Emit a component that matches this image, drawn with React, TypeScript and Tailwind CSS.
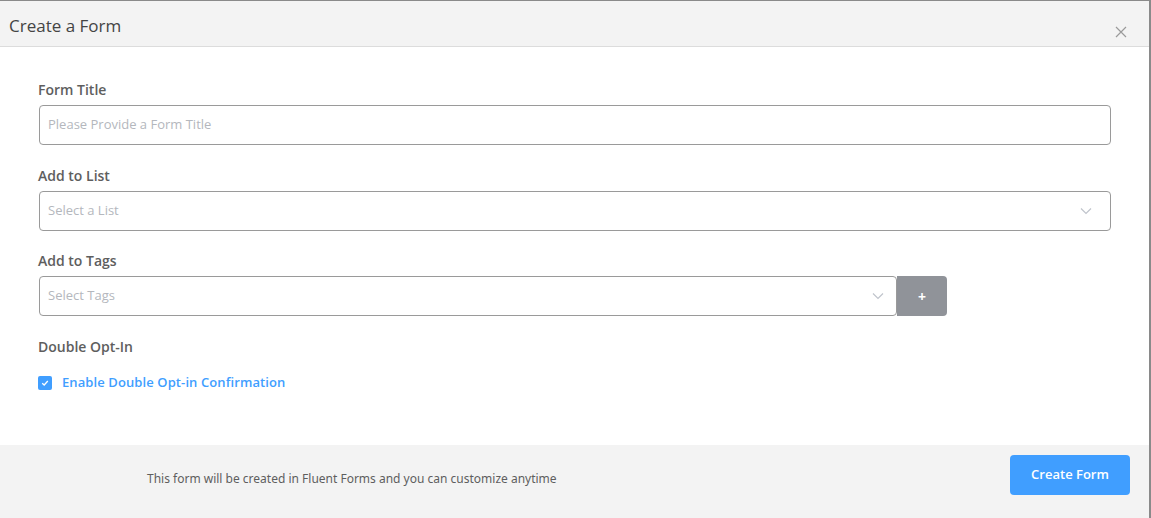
import { useState } from "react";

function Chevron() {
  return (
    <svg width="14" height="14" viewBox="0 0 14 14" fill="none">
      <path d="M2 4.5 7 9.5 12 4.5" stroke="#c0c4cc" strokeWidth="1.2" />
    </svg>
  );
}

export default function App() {
  const [doubleOptIn, setDoubleOptIn] = useState(true);

  return (
    <div
      className="flex h-[518px] w-[1151px] flex-col border-t border-r-2 border-t-[#8a8a8a] border-r-[#8a8a8a] bg-white text-[#5e5e5e]"
      style={{ fontFamily: '"Open Sans", "Noto Sans", sans-serif' }}
    >
      <div className="flex h-[46px] shrink-0 items-start justify-between border-b border-[#dcdcdc] bg-[#f3f3f3] pl-[9px] pr-[22px]">
        <h2 className="mt-[13px] text-[17px] leading-[24px] font-normal text-[#444]">
          Create a Form
        </h2>
        <button type="button" className="mt-[25px] text-[#999]" aria-label="Close">
          <svg width="12" height="12" viewBox="0 0 12 12">
            <path d="M1 1 11 11M11 1 1 11" stroke="#9a9a9a" strokeWidth="1.2" />
          </svg>
        </button>
      </div>

      <div className="flex flex-1 flex-col pl-[38px] pr-[38px] pt-[33px]">
        <label className="text-[14px] leading-[20px] font-semibold text-[#5e5e5e]">
          Form Title
        </label>
        <div className="mt-[5px] ml-px flex h-[40px] w-[1072px] items-center rounded border border-[#9a9a9a] px-[8px] text-[13px] text-[#b4b7bd]">
          Please Provide a Form Title
        </div>

        <label className="mt-[21px] text-[14px] leading-[20px] font-semibold text-[#5e5e5e]">
          Add to List
        </label>
        <div className="mt-[5px] ml-px flex h-[40px] w-[1072px] items-center justify-between rounded border border-[#9a9a9a] pl-[8px] pr-[17px] text-[13px] text-[#b4b7bd]">
          <span>Select a List</span>
          <Chevron />
        </div>

        <label className="mt-[20px] text-[14px] leading-[20px] font-semibold text-[#5e5e5e]">
          Add to Tags
        </label>
        <div className="mt-[5px] ml-px flex">
          <div className="flex h-[40px] w-[858px] items-center justify-between rounded border border-[#9a9a9a] pl-[8px] pr-[11px] text-[13px] text-[#b4b7bd]">
            <span>Select Tags</span>
            <Chevron />
          </div>
          <button
            type="button"
            className="h-[40px] w-[50px] rounded-r bg-[#909399] text-[14px] font-bold text-white"
          >
            +
          </button>
        </div>

        <label className="mt-[21px] text-[14px] leading-[20px] font-semibold text-[#5e5e5e]">
          Double Opt-In
        </label>
        <label className="mt-[16px] flex cursor-pointer items-center gap-[10px]">
          <span
            className="flex h-[14px] w-[14px] items-center justify-center rounded-[2px] bg-[#409eff]"
            onClick={() => setDoubleOptIn((v) => !v)}
          >
            {doubleOptIn ? (
              <svg width="10" height="10" viewBox="0 0 10 10">
                <path d="M2.2 5.2 4.2 7 7.8 3" stroke="white" strokeWidth="1.3" fill="none" />
              </svg>
            ) : null}
          </span>
          <span className="text-[13px] font-semibold tracking-[0.1px] text-[#409eff]">
            Enable Double Opt-in Confirmation
          </span>
        </label>
      </div>

      <div className="flex h-[73px] shrink-0 items-start justify-between bg-[#f3f3f3] pl-[147px] pr-[19px] pt-[10px]">
        <span
          className="mt-[15px] text-[12px] leading-[17px] text-[#5e5e5e]"
          style={{ fontFamily: '"Noto Sans", sans-serif' }}
        >
          This form will be created in Fluent Forms and you can customize anytime
        </span>
        <button
          type="button"
          className="h-[40px] w-[120px] rounded bg-[#409eff] text-[13px] font-semibold text-white"
        >
          Create Form
        </button>
      </div>
    </div>
  );
}
